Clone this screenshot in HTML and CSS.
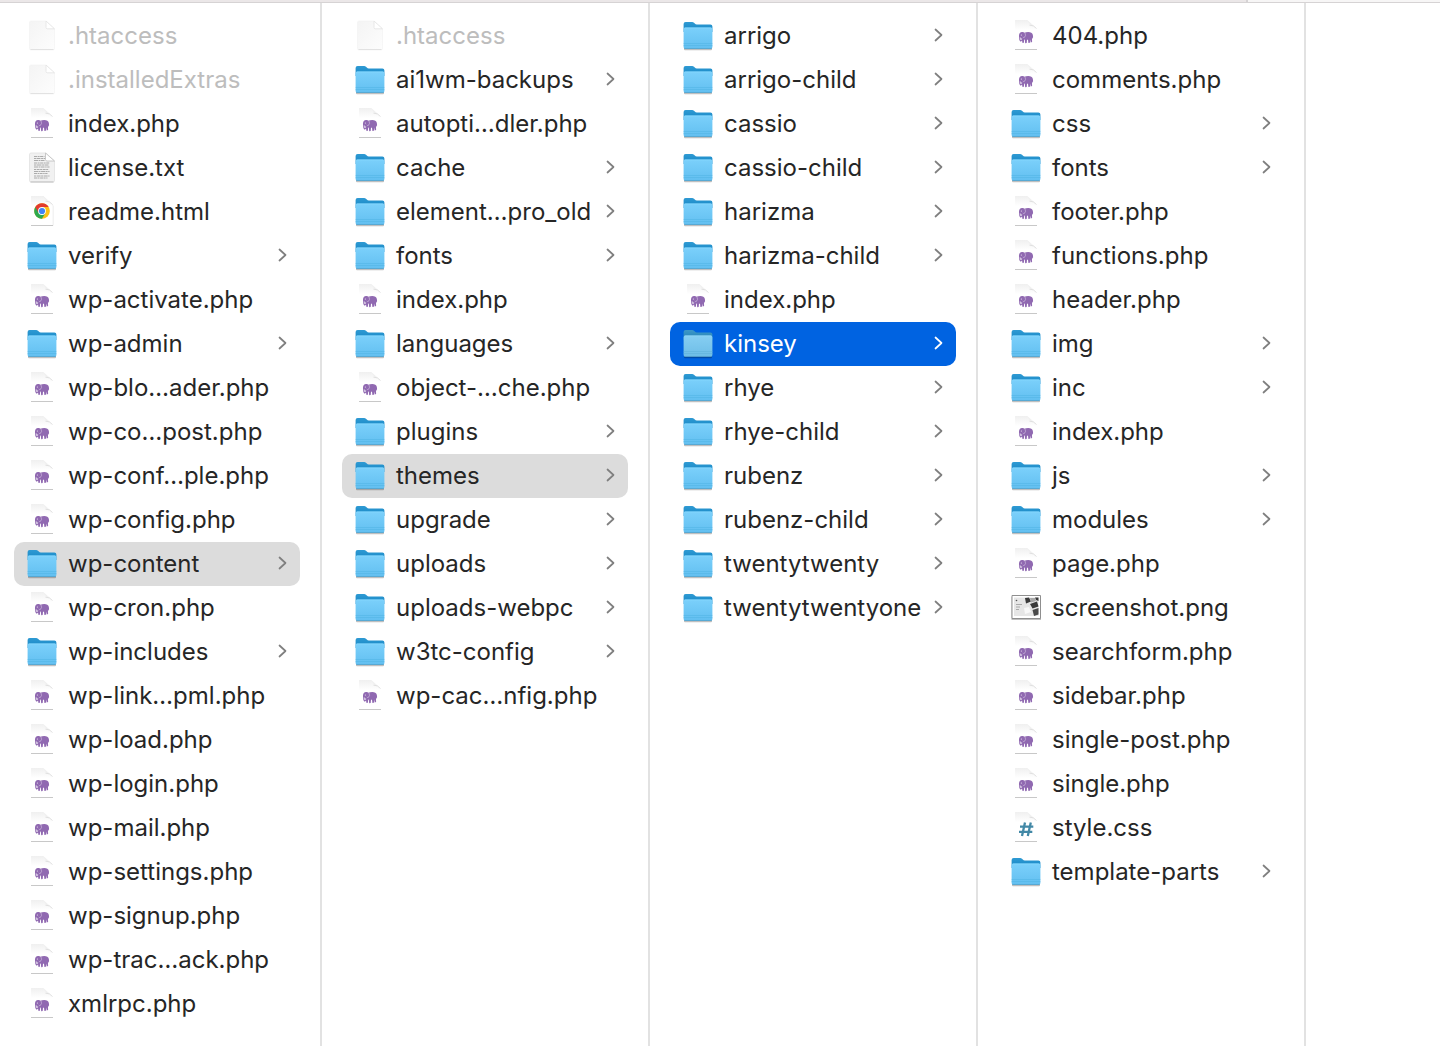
FILE: index.html
```html
<!DOCTYPE html>
<html lang="en">
<head>
    <meta charset="UTF-8">
    <meta name="viewport" content="width=device-width, initial-scale=1.0">
    <title>kinsey</title>
    <link rel="stylesheet" href="styles.css">
</head>
<body>

    <!-- Shared icons -->
    <svg class="sprite" aria-hidden="true">
        <defs>
            <linearGradient id="folder-front" x1="0" y1="0" x2="0" y2="1">
                <stop offset="0" stop-color="#7bd0fb"/>
                <stop offset="1" stop-color="#62bff0"/>
            </linearGradient>
            <linearGradient id="folder-back" x1="0" y1="0" x2="0" y2="1">
                <stop offset="0" stop-color="#2f9ad3"/>
                <stop offset="1" stop-color="#1686c4"/>
            </linearGradient>
            <linearGradient id="page-fill" x1="0" y1="0" x2="1" y2="1">
                <stop offset="0" stop-color="#f4f4f4"/>
                <stop offset="1" stop-color="#fdfdfd"/>
            </linearGradient>
            <linearGradient id="page-curl" x1="0" y1="1" x2="1" y2="0">
                <stop offset="0" stop-color="#ffffff"/>
                <stop offset="0.6" stop-color="#ededed"/>
                <stop offset="1" stop-color="#cfcfcf"/>
            </linearGradient>
            <linearGradient id="page-top" x1="0" y1="0" x2="0" y2="1">
                <stop offset="0" stop-color="#f0f0f0"/>
                <stop offset="0.35" stop-color="#ffffff"/>
            </linearGradient>
        </defs>

        <symbol id="folder" viewBox="0 0 32 32">
            <path d="M2 28h28v1.500q0 .8-1 .8H3q-1 0-1-.8z" fill="#000" opacity=".25"/>
            <path d="M1.600 4q0-2 2-2h6.500q1.100 0 1.900.8l.8.800q.8.900 2 .9h13.600q2 0 2 2V12H1.600z" fill="url(#folder-back)"/>
            <path d="M1.600 9.300q0-1.800 1.800-1.800h25.200q1.800 0 1.800 1.800V27q0 1.800-1.800 1.800H3.400q-1.800 0-1.800-1.800z" fill="url(#folder-front)"/>
            <path d="M2.500 7.900h27" stroke="#8fdcff" stroke-width=".6"/>
            <path d="M1.600 23.500h28.800M1.600 25.500h28.800" stroke="#4fb2e3" stroke-width=".5"/>
            <path d="M2.200 28.500h27.600" stroke="#4a9fcb" stroke-width=".7"/>
        </symbol>

        <symbol id="page" viewBox="0 0 32 32">
            <path d="M5 1h15l8.500 8v19.500q0 1.500-1.500 1.500H5q-1.500 0-1.500-1.500v-26Q3.500 1 5 1z" fill="url(#page-fill)" stroke="#f1f1f1" stroke-width=".6"/>
            <path d="M4.500 29.500h23" stroke="#e2e2e2"/>
            <path d="M20 1v6.500q0 1.300 1.300 1.300h7.200z" fill="#fff" stroke="#e2e2e2" stroke-width=".8"/>
        </symbol>

        <symbol id="doc" viewBox="0 0 32 32">
            <path d="M5 0h12l9.500 8v21H5z" fill="url(#page-top)"/>
            <path d="M16 0q3 1 3.500 5 4-.5 7.500 4L17.500.3z" fill="url(#page-curl)"/>
            <path d="M19.500 5.200q4.200-.3 7 3.300" fill="none" stroke="#d6d6d6" stroke-width=".7"/>
            <path d="M5 29.500h22" stroke="#c8c8c8" stroke-width="1"/>
        </symbol>

        <symbol id="php" viewBox="0 0 32 32">
            <use href="#doc"/>
            <path d="M9 15.300q.2-2.900 3-3.200 1.500-.2 2.600.6 1.200-.6 3.700-.6 3.700 0 4.500 2.600.4 1.300.2 4.100-.6-.3-.8-1.600-.4 1.700-.1 4.800l-1.400.6-.5-3-.3 3.200-1.500.2-.4-3.300-1 .1-.3 3.200-1.500.2-.4-3.600-.7.100-.2 3.100-1.400.2-.5-2.600q-.8 1.600-1.800 1Q8.800 20 9 15.300z" fill="#9069b1"/>
            <path d="M15 13q1.400 2.500-.6 4.400-1.100.4-1.600-.4" fill="none" stroke="#d7c7e4" stroke-width=".6"/>
            <path d="M10.200 17.400q.1 2 .8 2.500.6-.5.700-1.600" fill="none" stroke="#fff" stroke-width=".7"/>
            <circle cx="11.300" cy="14.900" r=".5" fill="#fff"/>
        </symbol>

        <symbol id="css" viewBox="0 0 32 32">
            <use href="#doc"/>
            <path d="M15 10.500l-3 13.500M20.800 10.500l-3 13.500M10 14.700h13.300M9 19.800h13.300" fill="none" stroke="#4288a6" stroke-width="2.300"/>
        </symbol>

        <symbol id="txt" viewBox="0 0 32 32">
            <path d="M5 1h15l8.500 8v19.500q0 1.500-1.500 1.500H5q-1.500 0-1.500-1.500v-26Q3.500 1 5 1z" fill="#f1f1f1" stroke="#dedede" stroke-width=".7"/>
            <path d="M4.500 30h23" stroke="#bdbdbd"/>
            <g fill="none" stroke="#a3a3a3" stroke-width=".9">
                <path d="M8 4.500h10.500" stroke-dasharray="3 .6 2 .5"/>
                <path d="M8 6.500h11.500" stroke-dasharray="2 .5 4 .6"/>
                <path d="M8 8.500h10.500" stroke-dasharray="4 .6 1.500 .5"/>
                <path d="M8 11h15.500" stroke-dasharray="3 .6 2 .5"/>
                <path d="M8 13h14.500" stroke-dasharray="2 .5 5 .6"/>
                <path d="M8 15h15.500" stroke-dasharray="4 .6 1.500 .5"/>
                <path d="M8 17.500h14.500" stroke-dasharray="2 .6 3 .5"/>
                <path d="M8 19.500h15.500" stroke-dasharray="4 .5 2 .6"/>
                <path d="M8 21.500h13.500" stroke-dasharray="3 .6 1.500 .5"/>
                <path d="M8 24h15.500" stroke-dasharray="2 .6 4 .5"/>
                <path d="M8 26h13.500" stroke-dasharray="3 .5 2 .6"/>
            </g>
            <path d="M19.500 1v6.500q0 1.500 1.500 1.500h7.500z" fill="#fff" stroke="#bdbdbd" stroke-width=".8"/>
        </symbol>

        <symbol id="html" viewBox="0 0 32 32">
            <path d="M5.500.500H17l10 9v20H5.500z" fill="#fff" stroke="#dddddd" stroke-width=".7"/>
            <use href="#doc"/>
            <circle cx="16" cy="15" r="7.800" fill="#fbc116"/>
            <path d="M9.250 11.100A7.800 7.800 0 0 0 16 22.800L19.400 17 16 15z" fill="#2da94f"/>
            <path d="M9.250 11.100A7.800 7.800 0 0 1 22.750 11.100H16L12.600 17z" fill="#e33b2e"/>
            <circle cx="16" cy="15" r="3.900" fill="#fff"/>
            <circle cx="16" cy="15" r="3.100" fill="#4285f4"/>
        </symbol>

        <symbol id="png" viewBox="0 0 32 32">
            <path d="M1.500 5h29.500v23H1.500z" fill="#000" opacity=".25"/>
            <path d="M2 3.500h28.500v23H2z" fill="#fff" stroke="#8f8f8f"/>
            <path d="M4 5.500h24.500v18.500H4z" fill="#e6e6e6"/>
            <path d="M15 6l4-.5 2 4-5 2zM20 12l7-2.500 1.500 5-6 2zM25 5.500h3.500V9L26 8z" fill="#3a3a3a"/>
            <path d="M20 6l5 0 1 3-5 1.500z" fill="#a8a8a8"/>
            <path d="M22.500 18l6-2v6.500L24 24z" fill="#4a4a4a"/>
            <path d="M14 16l5-1 2 5-6 2z" fill="#f8f8f8"/>
            <path d="M6 12.500h6M6 15h4M6 17.500h3" stroke="#9a9a9a" stroke-width=".8"/>
            <circle cx="6.500" cy="8.500" r=".8" fill="#555"/>
        </symbol>

        <symbol id="chevron" viewBox="0 0 10 14">
            <path d="M1.500 1.500l6 5.500-6 5.500" fill="none" stroke="currentColor" stroke-width="1.700" stroke-linecap="round" stroke-linejoin="round"/>
        </symbol>
    </svg>

    <div class="toolbar"><div class="toolbar-main"></div><div class="toolbar-side"></div></div>

    <main class="browser">
        <ul class="column first">
            <li><a class="item hidden-file" href="#"><svg class="icon"><use href="#page"/></svg><span class="name">.htaccess</span></a></li>
            <li><a class="item hidden-file" href="#"><svg class="icon"><use href="#page"/></svg><span class="name">.installedExtras</span></a></li>
            <li><a class="item" href="#"><svg class="icon"><use href="#php"/></svg><span class="name">index.php</span></a></li>
            <li><a class="item" href="#"><svg class="icon"><use href="#txt"/></svg><span class="name">license.txt</span></a></li>
            <li><a class="item" href="#"><svg class="icon"><use href="#html"/></svg><span class="name">readme.html</span></a></li>
            <li><a class="item" href="#"><svg class="icon"><use href="#folder"/></svg><span class="name">verify</span><svg class="chevron"><use href="#chevron"/></svg></a></li>
            <li><a class="item" href="#"><svg class="icon"><use href="#php"/></svg><span class="name">wp-activate.php</span></a></li>
            <li><a class="item" href="#"><svg class="icon"><use href="#folder"/></svg><span class="name">wp-admin</span><svg class="chevron"><use href="#chevron"/></svg></a></li>
            <li><a class="item" href="#"><svg class="icon"><use href="#php"/></svg><span class="name">wp-blo…ader.php</span></a></li>
            <li><a class="item" href="#"><svg class="icon"><use href="#php"/></svg><span class="name">wp-co…post.php</span></a></li>
            <li><a class="item" href="#"><svg class="icon"><use href="#php"/></svg><span class="name">wp-conf…ple.php</span></a></li>
            <li><a class="item" href="#"><svg class="icon"><use href="#php"/></svg><span class="name">wp-config.php</span></a></li>
            <li><a class="item open" href="#"><svg class="icon"><use href="#folder"/></svg><span class="name">wp-content</span><svg class="chevron"><use href="#chevron"/></svg></a></li>
            <li><a class="item" href="#"><svg class="icon"><use href="#php"/></svg><span class="name">wp-cron.php</span></a></li>
            <li><a class="item" href="#"><svg class="icon"><use href="#folder"/></svg><span class="name">wp-includes</span><svg class="chevron"><use href="#chevron"/></svg></a></li>
            <li><a class="item" href="#"><svg class="icon"><use href="#php"/></svg><span class="name">wp-link…pml.php</span></a></li>
            <li><a class="item" href="#"><svg class="icon"><use href="#php"/></svg><span class="name">wp-load.php</span></a></li>
            <li><a class="item" href="#"><svg class="icon"><use href="#php"/></svg><span class="name">wp-login.php</span></a></li>
            <li><a class="item" href="#"><svg class="icon"><use href="#php"/></svg><span class="name">wp-mail.php</span></a></li>
            <li><a class="item" href="#"><svg class="icon"><use href="#php"/></svg><span class="name">wp-settings.php</span></a></li>
            <li><a class="item" href="#"><svg class="icon"><use href="#php"/></svg><span class="name">wp-signup.php</span></a></li>
            <li><a class="item" href="#"><svg class="icon"><use href="#php"/></svg><span class="name">wp-trac…ack.php</span></a></li>
            <li><a class="item" href="#"><svg class="icon"><use href="#php"/></svg><span class="name">xmlrpc.php</span></a></li>
        </ul>

        <!-- wp-content -->
        <ul class="column">
            <li><a class="item hidden-file" href="#"><svg class="icon"><use href="#page"/></svg><span class="name">.htaccess</span></a></li>
            <li><a class="item" href="#"><svg class="icon"><use href="#folder"/></svg><span class="name">ai1wm-backups</span><svg class="chevron"><use href="#chevron"/></svg></a></li>
            <li><a class="item" href="#"><svg class="icon"><use href="#php"/></svg><span class="name">autopti…dler.php</span></a></li>
            <li><a class="item" href="#"><svg class="icon"><use href="#folder"/></svg><span class="name">cache</span><svg class="chevron"><use href="#chevron"/></svg></a></li>
            <li><a class="item" href="#"><svg class="icon"><use href="#folder"/></svg><span class="name">element…pro_old</span><svg class="chevron"><use href="#chevron"/></svg></a></li>
            <li><a class="item" href="#"><svg class="icon"><use href="#folder"/></svg><span class="name">fonts</span><svg class="chevron"><use href="#chevron"/></svg></a></li>
            <li><a class="item" href="#"><svg class="icon"><use href="#php"/></svg><span class="name">index.php</span></a></li>
            <li><a class="item" href="#"><svg class="icon"><use href="#folder"/></svg><span class="name">languages</span><svg class="chevron"><use href="#chevron"/></svg></a></li>
            <li><a class="item" href="#"><svg class="icon"><use href="#php"/></svg><span class="name">object-…che.php</span></a></li>
            <li><a class="item" href="#"><svg class="icon"><use href="#folder"/></svg><span class="name">plugins</span><svg class="chevron"><use href="#chevron"/></svg></a></li>
            <li><a class="item open" href="#"><svg class="icon"><use href="#folder"/></svg><span class="name">themes</span><svg class="chevron"><use href="#chevron"/></svg></a></li>
            <li><a class="item" href="#"><svg class="icon"><use href="#folder"/></svg><span class="name">upgrade</span><svg class="chevron"><use href="#chevron"/></svg></a></li>
            <li><a class="item" href="#"><svg class="icon"><use href="#folder"/></svg><span class="name">uploads</span><svg class="chevron"><use href="#chevron"/></svg></a></li>
            <li><a class="item" href="#"><svg class="icon"><use href="#folder"/></svg><span class="name">uploads-webpc</span><svg class="chevron"><use href="#chevron"/></svg></a></li>
            <li><a class="item" href="#"><svg class="icon"><use href="#folder"/></svg><span class="name">w3tc-config</span><svg class="chevron"><use href="#chevron"/></svg></a></li>
            <li><a class="item" href="#"><svg class="icon"><use href="#php"/></svg><span class="name">wp-cac…nfig.php</span></a></li>
        </ul>

        <!-- themes -->
        <ul class="column">
            <li><a class="item" href="#"><svg class="icon"><use href="#folder"/></svg><span class="name">arrigo</span><svg class="chevron"><use href="#chevron"/></svg></a></li>
            <li><a class="item" href="#"><svg class="icon"><use href="#folder"/></svg><span class="name">arrigo-child</span><svg class="chevron"><use href="#chevron"/></svg></a></li>
            <li><a class="item" href="#"><svg class="icon"><use href="#folder"/></svg><span class="name">cassio</span><svg class="chevron"><use href="#chevron"/></svg></a></li>
            <li><a class="item" href="#"><svg class="icon"><use href="#folder"/></svg><span class="name">cassio-child</span><svg class="chevron"><use href="#chevron"/></svg></a></li>
            <li><a class="item" href="#"><svg class="icon"><use href="#folder"/></svg><span class="name">harizma</span><svg class="chevron"><use href="#chevron"/></svg></a></li>
            <li><a class="item" href="#"><svg class="icon"><use href="#folder"/></svg><span class="name">harizma-child</span><svg class="chevron"><use href="#chevron"/></svg></a></li>
            <li><a class="item" href="#"><svg class="icon"><use href="#php"/></svg><span class="name">index.php</span></a></li>
            <li><a class="item selected" href="#"><svg class="icon"><use href="#folder"/></svg><span class="name">kinsey</span><svg class="chevron"><use href="#chevron"/></svg></a></li>
            <li><a class="item" href="#"><svg class="icon"><use href="#folder"/></svg><span class="name">rhye</span><svg class="chevron"><use href="#chevron"/></svg></a></li>
            <li><a class="item" href="#"><svg class="icon"><use href="#folder"/></svg><span class="name">rhye-child</span><svg class="chevron"><use href="#chevron"/></svg></a></li>
            <li><a class="item" href="#"><svg class="icon"><use href="#folder"/></svg><span class="name">rubenz</span><svg class="chevron"><use href="#chevron"/></svg></a></li>
            <li><a class="item" href="#"><svg class="icon"><use href="#folder"/></svg><span class="name">rubenz-child</span><svg class="chevron"><use href="#chevron"/></svg></a></li>
            <li><a class="item" href="#"><svg class="icon"><use href="#folder"/></svg><span class="name">twentytwenty</span><svg class="chevron"><use href="#chevron"/></svg></a></li>
            <li><a class="item" href="#"><svg class="icon"><use href="#folder"/></svg><span class="name">twentytwentyone</span><svg class="chevron"><use href="#chevron"/></svg></a></li>
        </ul>

        <!-- kinsey -->
        <ul class="column">
            <li><a class="item" href="#"><svg class="icon"><use href="#php"/></svg><span class="name">404.php</span></a></li>
            <li><a class="item" href="#"><svg class="icon"><use href="#php"/></svg><span class="name">comments.php</span></a></li>
            <li><a class="item" href="#"><svg class="icon"><use href="#folder"/></svg><span class="name">css</span><svg class="chevron"><use href="#chevron"/></svg></a></li>
            <li><a class="item" href="#"><svg class="icon"><use href="#folder"/></svg><span class="name">fonts</span><svg class="chevron"><use href="#chevron"/></svg></a></li>
            <li><a class="item" href="#"><svg class="icon"><use href="#php"/></svg><span class="name">footer.php</span></a></li>
            <li><a class="item" href="#"><svg class="icon"><use href="#php"/></svg><span class="name">functions.php</span></a></li>
            <li><a class="item" href="#"><svg class="icon"><use href="#php"/></svg><span class="name">header.php</span></a></li>
            <li><a class="item" href="#"><svg class="icon"><use href="#folder"/></svg><span class="name">img</span><svg class="chevron"><use href="#chevron"/></svg></a></li>
            <li><a class="item" href="#"><svg class="icon"><use href="#folder"/></svg><span class="name">inc</span><svg class="chevron"><use href="#chevron"/></svg></a></li>
            <li><a class="item" href="#"><svg class="icon"><use href="#php"/></svg><span class="name">index.php</span></a></li>
            <li><a class="item" href="#"><svg class="icon"><use href="#folder"/></svg><span class="name">js</span><svg class="chevron"><use href="#chevron"/></svg></a></li>
            <li><a class="item" href="#"><svg class="icon"><use href="#folder"/></svg><span class="name">modules</span><svg class="chevron"><use href="#chevron"/></svg></a></li>
            <li><a class="item" href="#"><svg class="icon"><use href="#php"/></svg><span class="name">page.php</span></a></li>
            <li><a class="item" href="#"><svg class="icon"><use href="#png"/></svg><span class="name">screenshot.png</span></a></li>
            <li><a class="item" href="#"><svg class="icon"><use href="#php"/></svg><span class="name">searchform.php</span></a></li>
            <li><a class="item" href="#"><svg class="icon"><use href="#php"/></svg><span class="name">sidebar.php</span></a></li>
            <li><a class="item" href="#"><svg class="icon"><use href="#php"/></svg><span class="name">single-post.php</span></a></li>
            <li><a class="item" href="#"><svg class="icon"><use href="#php"/></svg><span class="name">single.php</span></a></li>
            <li><a class="item" href="#"><svg class="icon"><use href="#css"/></svg><span class="name">style.css</span></a></li>
            <li><a class="item" href="#"><svg class="icon"><use href="#folder"/></svg><span class="name">template-parts</span><svg class="chevron"><use href="#chevron"/></svg></a></li>
        </ul>
    </main>

</body>
</html>
```

FILE: styles.css
```css
* {
    box-sizing: border-box;
}

body {
    display: flex;
    flex-direction: column;
    min-height: 100vh;
    margin: 0;
    background: #ffffff;
    color: #262626;
    font-family: Inter, "Liberation Sans", sans-serif;
    font-size: 24px;
    line-height: 44px;
    overflow-x: hidden;
}

.sprite {
    position: absolute;
    width: 0;
    height: 0;
}

/* Bottom edge of the window toolbar */
.toolbar {
    display: flex;
    height: 3px;
    border-bottom: 1px solid #d6d3d4;
}

.toolbar-main {
    flex: 13;
    background: #ebe7e8;
    border-right: 2px solid #d6d3d4;
}

.toolbar-side {
    flex: 2;
    background: #f7f6f6;
}

/* Columns */
.browser {
    display: flex;
    flex: 1;
}

.column {
    flex: none;
    width: 328px;
    margin: 0;
    padding: 11px 20px 20px;
    border-right: 2px solid #e2e2e2;
    list-style: none;
}

.column.first {
    width: 322px;
    padding-left: 14px;
}

.item {
    display: flex;
    align-items: center;
    gap: 10px;
    height: 44px;
    padding: 0 12px;
    border-radius: 10px;
    color: inherit;
    text-decoration: none;
    white-space: nowrap;
}

.icon {
    flex: none;
    width: 32px;
    height: 32px;
}

.name {
    flex: 1;
    min-width: 0;
}

.chevron {
    flex: none;
    width: 10px;
    height: 14px;
    margin-bottom: 2px;
    color: #7f7f7f;
}

/* States */
.hidden-file {
    color: #bdbdbd;
}

.open {
    background: #dcdcdc;
}

.selected {
    background: #0063e1;
    color: #ffffff;
}

.selected .chevron {
    color: #ffffff;
}

.selected .icon {
    filter: saturate(0.85);
}
```
